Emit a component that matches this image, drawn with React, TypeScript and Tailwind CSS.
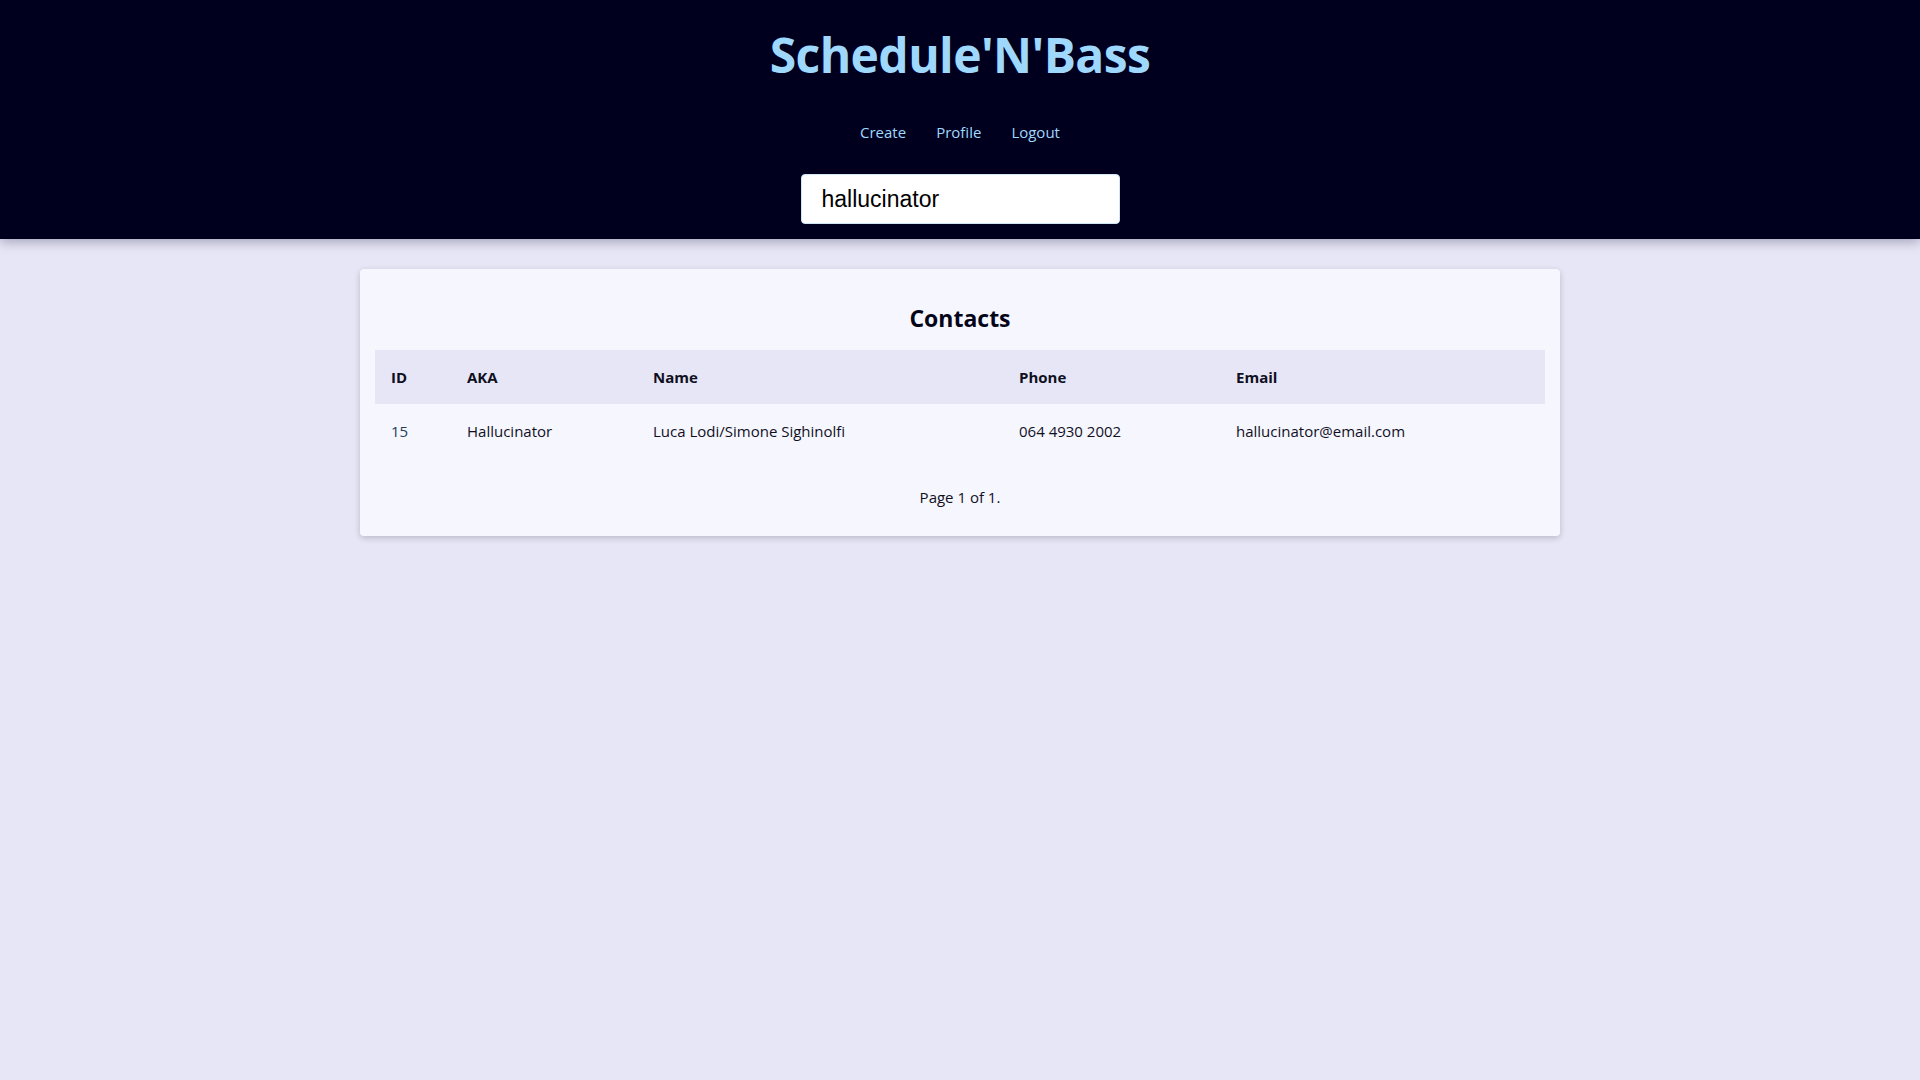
import React from "react";

const rows = [
  { id: "15", aka: "Hallucinator", name: "Luca Lodi/Simone Sighinolfi", phone: "064 4930 2002", email: "hallucinator@email.com" },
];

export default function App() {
  return (
    <div className="min-h-screen bg-[#e6e6f6] font-['Open_Sans',sans-serif] text-[#10101e]">
      <header className="h-[239px] bg-[#00001e] flex flex-col items-center shadow-[0_4px_10px_rgba(0,0,40,0.25)] relative">
        <h1 className="mt-[30px] text-[48px] leading-[50px] font-bold text-[#9fd8fd] tracking-[-0.6px]">Schedule'N'Bass</h1>
        <nav className="mt-[40px] flex gap-[30px] text-[15px] leading-[24px] text-[#9fd8fd]">
          <a href="#">Create</a>
          <a href="#">Profile</a>
          <a href="#">Logout</a>
        </nav>
        <input
          defaultValue="hallucinator"
          className="mt-[30px] w-[319px] h-[50px] bg-white rounded-[4px] border border-[#cfe6f7] px-[20px] text-[23px] font-['Liberation_Sans',Arial,sans-serif] text-black outline-none"
        />
      </header>
      <main className="pt-[30px] flex justify-center">
        <div className="w-[1200px] bg-[#f6f6ff] rounded-[4px] shadow-[0_2px_6px_rgba(0,0,40,0.2)] px-[15px] pt-[33px] pb-[27px]">
          <h2 className="text-center text-[23px] leading-[32px] font-bold text-[#05051a]">Contacts</h2>
          <table className="mt-[16px] w-full text-left text-[15px] border-collapse">
            <thead>
              <tr className="bg-[#e6e6f6] h-[54px]">
                <th className="w-[76px] pl-[16px] font-bold">ID</th>
                <th className="w-[186px] pl-[16px] font-bold">AKA</th>
                <th className="w-[366px] pl-[16px] font-bold">Name</th>
                <th className="w-[217px] pl-[16px] font-bold">Phone</th>
                <th className="pl-[16px] font-bold">Email</th>
              </tr>
            </thead>
            <tbody>
              {rows.map((r) => (
                <tr key={r.id} className="h-[54px]">
                  <td className="pl-[16px] text-[#23405a]">{r.id}</td>
                  <td className="pl-[16px]">{r.aka}</td>
                  <td className="pl-[16px]">{r.name}</td>
                  <td className="pl-[16px]">{r.phone}</td>
                  <td className="pl-[16px]">{r.email}</td>
                </tr>
              ))}
            </tbody>
          </table>
          <p className="mt-[27px] text-center text-[15px] leading-[24px]">Page 1 of 1.</p>
        </div>
      </main>
    </div>
  );
}
